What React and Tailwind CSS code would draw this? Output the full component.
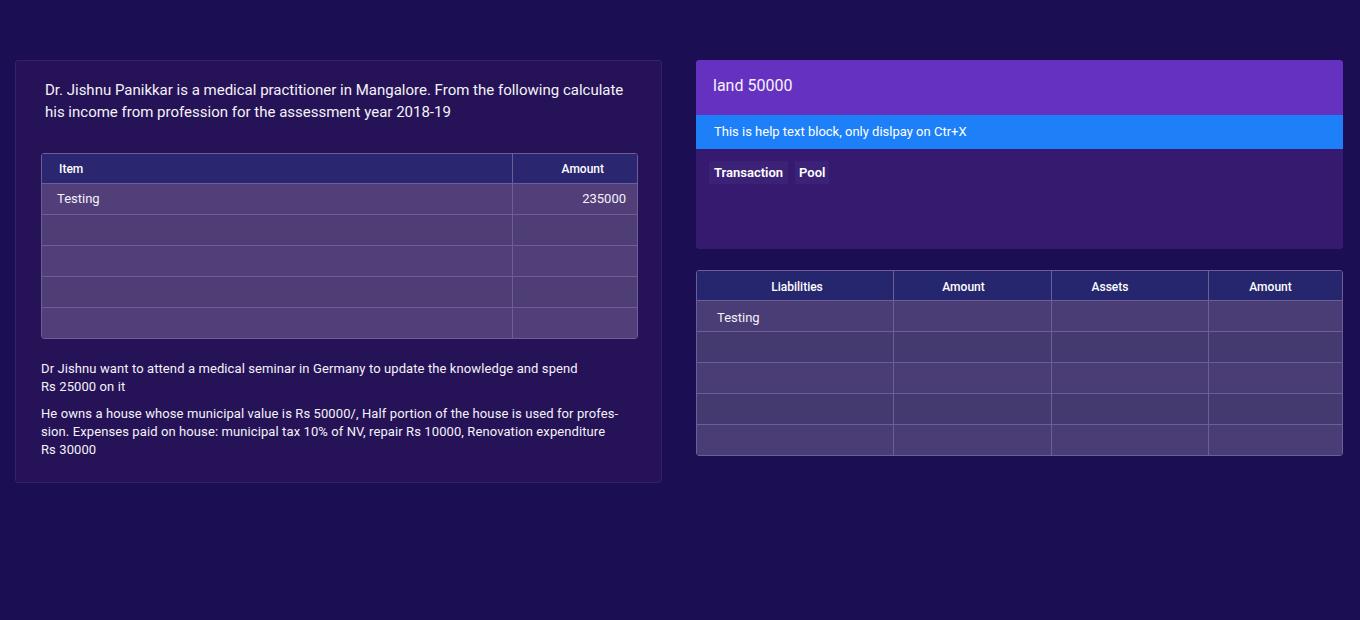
import React from "react";

const font = { fontFamily: "Roboto, 'Noto Sans', sans-serif" };

function LeftTable() {
  const rows = [["Testing", "235000"], ["", ""], ["", ""], ["", ""], ["", ""]];
  return (
    <div className="mt-[30px] border border-[#6c5e98] rounded-[3px] overflow-hidden">
      <div className="flex h-[29px] bg-[#2a2670] text-[12px] font-medium text-white">
        <div className="flex-1 flex items-center pl-[17px] pt-[1px]">Item</div>
        <div className="w-[125px] border-l border-[#6c5e98] flex items-center justify-end pr-[33px] pt-[1px]">Amount</div>
      </div>
      {rows.map((r, i) => (
        <div key={i} className={`flex h-[31px] border-t border-[#6c5e98] text-[13px] text-[#f4f2f8] ${i % 2 === 1 ? "bg-[#4f3e76]" : "bg-[#523f7a]"}`}>
          <div className="flex-1 flex items-center pl-[15px]">{r[0]}</div>
          <div className="w-[125px] border-l border-[#6c5e98] flex items-center justify-end pr-[11px]">{r[1]}</div>
        </div>
      ))}
    </div>
  );
}

function RightTable() {
  const rows = ["Testing", "", "", "", ""];
  return (
    <div className="mt-[21px] border border-[#6c5e98] rounded-[3px] overflow-hidden">
      <div className="grid grid-cols-[196px_158px_157px_1fr] h-[29px] bg-[#25266e] text-[12px] font-medium text-white">
        <div className="flex items-center justify-center pl-[4px] pt-[2px]">Liabilities</div>
        <div className="border-l border-[#6c5e98] flex items-center justify-center pr-[18px] pt-[2px]">Amount</div>
        <div className="border-l border-[#6c5e98] flex items-center justify-center pr-[40px] pt-[2px]">Assets</div>
        <div className="border-l border-[#6c5e98] flex items-center justify-center pr-[10px] pt-[2px]">Amount</div>
      </div>
      {rows.map((r, i) => (
        <div key={i} className={`grid grid-cols-[196px_158px_157px_1fr] h-[31px] border-t border-[#6c5e98] text-[13px] text-[#f4f2f8] ${i % 2 === 1 ? "bg-[#453a6f]" : "bg-[#4a3d75]"}`}>
          <div className="flex items-center pl-[20px] pt-[3px]">{r}</div>
          <div className="border-l border-[#6c5e98]"></div>
          <div className="border-l border-[#6c5e98]"></div>
          <div className="border-l border-[#6c5e98]"></div>
        </div>
      ))}
    </div>
  );
}

export default function App() {
  return (
    <div className="min-h-[620px] w-full bg-[#1b0e52] text-white" style={font}>
      <div className="flex items-start gap-[34px] pl-[15px] pt-[60px]">
        <div className="w-[647px] border border-[#33216a] rounded-[3px] bg-[#251257] pl-[25px] pr-[23px] pt-[18px] pb-[23px]">
          <p className="px-[4px] text-[15px] leading-[22px] text-[#f4f2f8]">
            Dr. Jishnu Panikkar is a medical practitioner in Mangalore. From the following calculate his income from profession for the assessment year 2018-19
          </p>
          <LeftTable />
          <div className="mt-[21px] w-[580px] text-[13px] leading-[18px] text-[#f4f2f8] flex flex-col gap-[9px] tracking-[0.1px]">
            <p>Dr Jishnu want to attend a medical seminar in Germany to update the knowledge and spend<br />Rs 25000 on it</p>
            <p>
              He owns a house whose municipal value is Rs 50000/, Half portion of the house is used for profes-<br />
              sion. Expenses paid on house: municipal tax 10% of NV, repair Rs 10000, Renovation expenditure<br />
              Rs 30000
            </p>
          </div>
        </div>
        <div className="w-[647px]">
          <div className="rounded-[3px] overflow-hidden">
            <div className="h-[55px] bg-[#6531c0] px-[17px] pb-[4px] flex items-center text-[16px] text-[#f6f2fc]">land 50000</div>
            <div className="h-[34px] bg-[#1e80f8] px-[18px] flex items-center text-[13px] text-white">This is help text block, only dislpay on Ctr+X</div>
            <div className="h-[100px] bg-[#361a70] px-[13px] pt-[12px] flex items-start gap-[7px]">
              <span className="h-[23px] px-[5px] flex items-center bg-[#3c2276] text-[13px] font-semibold">Transaction</span>
              <span className="h-[23px] px-[4px] flex items-center bg-[#3c2276] text-[13px] font-semibold">Pool</span>
            </div>
          </div>
          <RightTable />
        </div>
      </div>
    </div>
  );
}
